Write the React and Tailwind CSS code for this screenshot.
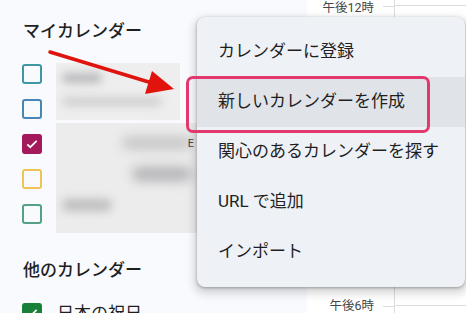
import React from "react";

const jp = { fontFamily: "Roboto, 'Noto Sans CJK JP', sans-serif" };

function Box({ color, checked }) {
  return (
    <div
      className="w-[20px] h-[20px] rounded-[3px] border-2 flex items-center justify-center"
      style={{ borderColor: color, backgroundColor: checked ? color : "transparent" }}
    >
      {checked && (
        <svg width="14" height="14" viewBox="0 0 24 24">
          <path d="M4 12.5l5 5L20 6.5" fill="none" stroke="white" strokeWidth="3" />
        </svg>
      )}
    </div>
  );
}

export default function App() {
  const rows = [
    { color: "#3f97a6" },
    { color: "#4a86b3" },
    { color: "#a3195b", checked: true },
    { color: "#eec456" },
    { color: "#54a283" },
  ];
  const items = [
    "カレンダーに登録",
    "新しいカレンダーを作成",
    "関心のあるカレンダーを探す",
    "URL で追加",
    "インポート",
  ];
  return (
    <div className="relative w-[466px] h-[313px] overflow-hidden flex bg-[#f8fafd]" style={jp}>
      {/* Sidebar */}
      <div className="w-[307px] shrink-0 pl-[22px] pt-[19px]">
        <div className="h-[24px] leading-[24px] text-[17px] font-medium text-[#1f1f1f] pl-[1px]">
          マイカレンダー
        </div>
        <div className="mt-[13px] flex">
          <div className="flex flex-col">
            {rows.map((r, i) => (
              <div key={i} className="h-[35px] flex items-center">
                <Box color={r.color} checked={r.checked} />
              </div>
            ))}
          </div>
          <div className="ml-[14px] pt-[7px] flex flex-col">
            <div className="w-[124px] h-[57px] bg-[#eeeeef] overflow-hidden flex flex-col gap-[14px] pt-[10px] pl-[6px]">
              <div className="w-[40px] h-[10px] rounded-full bg-[#b9b9bb] blur-[4px]" />
              <div className="w-[100px] h-[9px] rounded-full bg-[#cfcfd1] blur-[4px]" />
            </div>
            <div className="relative mt-[3px] w-[141px] h-[110px] bg-[#ececed] overflow-hidden flex flex-col pl-[6px]">
              <div className="mt-[14px] ml-[60px] w-[70px] h-[12px] rounded-full bg-[#c3c3c5] blur-[6px]" />
              <div className="mt-[18px] ml-[70px] w-[60px] h-[14px] rounded-full bg-[#b3b3b5] blur-[6px]" />
              <div className="mt-[18px] w-[50px] h-[12px] rounded-full bg-[#bdbdbf] blur-[5px]" />
              <div className="absolute right-[3px] top-[13px] text-[11px] text-[#444]">E</div>
            </div>
          </div>
        </div>
        <div className="mt-[25px] h-[24px] leading-[24px] text-[17px] font-medium text-[#1f1f1f] pl-[1px]">
          他のカレンダー
        </div>
        <div className="mt-[21px] flex items-center">
          <Box color="#188038" checked />
          <span className="ml-[15px] text-[17px] text-[#1f1f1f] leading-[20px]">日本の祝日</span>
        </div>
      </div>

      {/* Main grid */}
      <div className="flex-1 flex bg-white">
        <div className="w-[87px] shrink-0 flex flex-col">
          <div className="h-[12px] flex items-center">
            <span className="w-[67px] text-right text-[12.5px] text-[#444746] leading-[12px] pt-[3px]">午後12時</span>
            <div className="ml-[9px] flex-1 h-px bg-[#dadce0]" />
          </div>
          <div className="h-[288px]" />
          <div className="h-[12px] flex items-center">
            <span className="w-[67px] text-right text-[12.5px] text-[#444746] leading-[12px]">午後6時</span>
            <div className="ml-[9px] flex-1 h-px bg-[#dadce0]" />
          </div>
        </div>
        <div className="flex-1 border-l border-[#dadce0] flex flex-col">
          <div className="h-[5px]" />
          <div className="h-px bg-[#dadce0]" />
          <div className="h-[299px]" />
          <div className="h-px bg-[#dadce0]" />
        </div>
      </div>

      {/* Menu */}
      <div className="absolute left-[197px] top-[17px] w-[268px] h-[270px] rounded-[8px] bg-[#eef1f6] py-[10px] shadow-[0_1px_3px_rgba(0,0,0,0.3),0_4px_8px_3px_rgba(0,0,0,0.15)]">
        {items.map((t, i) => (
          <div
            key={i}
            className={
              "h-[50px] flex items-center pl-[21px] text-[17px] text-[#1f1f1f] " +
              (i === 1 ? "bg-[#e0e3e8]" : "")
            }
          >
            {t}
          </div>
        ))}
      </div>

      {/* Annotation box */}
      <div className="absolute left-[186px] top-[76px] w-[244px] h-[57px] rounded-[7px] border-[3px] border-[#e3386d]" />

      {/* Arrow */}
      <svg className="absolute left-0 top-0 pointer-events-none" width="466" height="313">
        <line x1="50" y1="52" x2="152" y2="83" stroke="#e0140c" strokeWidth="3.5" strokeLinecap="round" />
        <polygon points="174,89 145,94 152,71" fill="#e0140c" />
      </svg>
    </div>
  );
}
